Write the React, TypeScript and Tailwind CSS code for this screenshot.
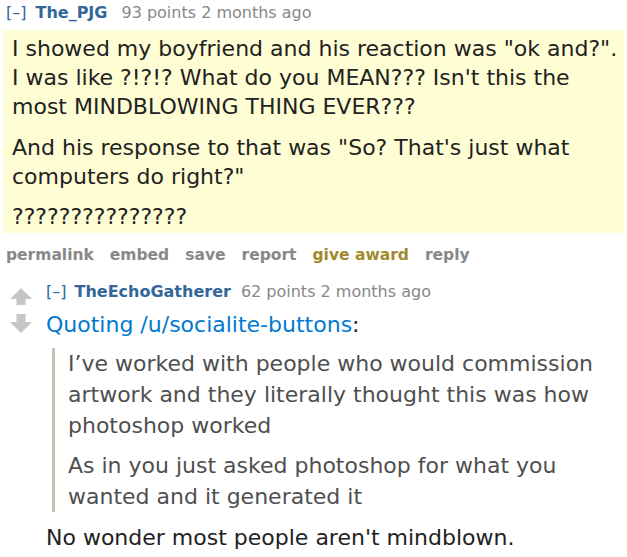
import React from "react";

const UpArrow = () => (
  <svg width="22" height="17" viewBox="0 0 22 17">
    <path d="M11 0 L22 11 H15.5 V17 H6.5 V11 H0 Z" fill="#c6c6c6" />
  </svg>
);

const DownArrow = () => (
  <svg width="22" height="19" viewBox="0 0 22 19">
    <path d="M11 19 L22 8 H15.5 V0 H6.5 V8 H0 Z" fill="#c6c6c6" />
  </svg>
);

const App: React.FC = () => {
  return (
    <div className="w-[627px] h-[557px] bg-white font-['DejaVu_Sans',Verdana,sans-serif] text-[#222] overflow-hidden">
      {/* first comment */}
      <div className="pl-[6px] pt-[4px] text-[16px] leading-[18px] flex items-center">
        <span className="text-[#369]">[–]</span>
        <span className="text-[#369] font-bold ml-[9px]">The_PJG</span>
        <span className="text-[#888] ml-[14px]">93 points 2 months ago</span>
      </div>
      <div className="mx-[3px] mt-[8px] bg-[#fffdd4] pl-[9px] pr-[4px] pt-[4px] pb-[2px] text-[22px] leading-[29px]">
        <p>
          I showed my boyfriend and his reaction was "ok and?". I was like ?!?!? What do you MEAN??? Isn't this the most
          MINDBLOWING THING EVER???
        </p>
        <p className="mt-[12px]">And his response to that was "So? That's just what computers do right?"</p>
        <p className="mt-[11px]">???????????????</p>
      </div>
      <ul className="flex gap-[16px] pl-[6px] mt-[8px] text-[15.5px] leading-[28px] font-bold text-[#888]">
        <li>permalink</li>
        <li>embed</li>
        <li>save</li>
        <li>report</li>
        <li className="text-[#a08a2c]">give award</li>
        <li>reply</li>
      </ul>

      {/* reply */}
      <div className="flex mt-[14px]">
        <div className="w-[46px] flex flex-col items-center pt-[5px] gap-[9px] pr-[4px]">
          <UpArrow />
          <DownArrow />
        </div>
        <div className="flex-1">
          <div className="text-[16px] leading-[18px] flex items-center">
            <span className="text-[#369]">[–]</span>
            <span className="text-[#369] font-bold ml-[8px]">TheEchoGatherer</span>
            <span className="text-[#888] ml-[10px]">62 points 2 months ago</span>
          </div>
          <p className="mt-[9px] text-[22px] leading-[30px]">
            <span className="text-[#0079d3]">Quoting /u/socialite-buttons</span>:
          </p>
          <blockquote className="ml-[6px] mt-[8px] border-l-[3px] border-[#c5c1ad] pl-[13px] pr-[20px] text-[#4f4f4f] text-[22px] leading-[31px]">
            <p>I’ve worked with people who would commission artwork and they literally thought this was how photoshop worked</p>
            <p className="mt-[9px]">As in you just asked photoshop for what you wanted and it generated it</p>
          </blockquote>
          <p className="mt-[11px] text-[22px] leading-[30px]">No wonder most people aren't mindblown.</p>
        </div>
      </div>
    </div>
  );
};

export default App;
